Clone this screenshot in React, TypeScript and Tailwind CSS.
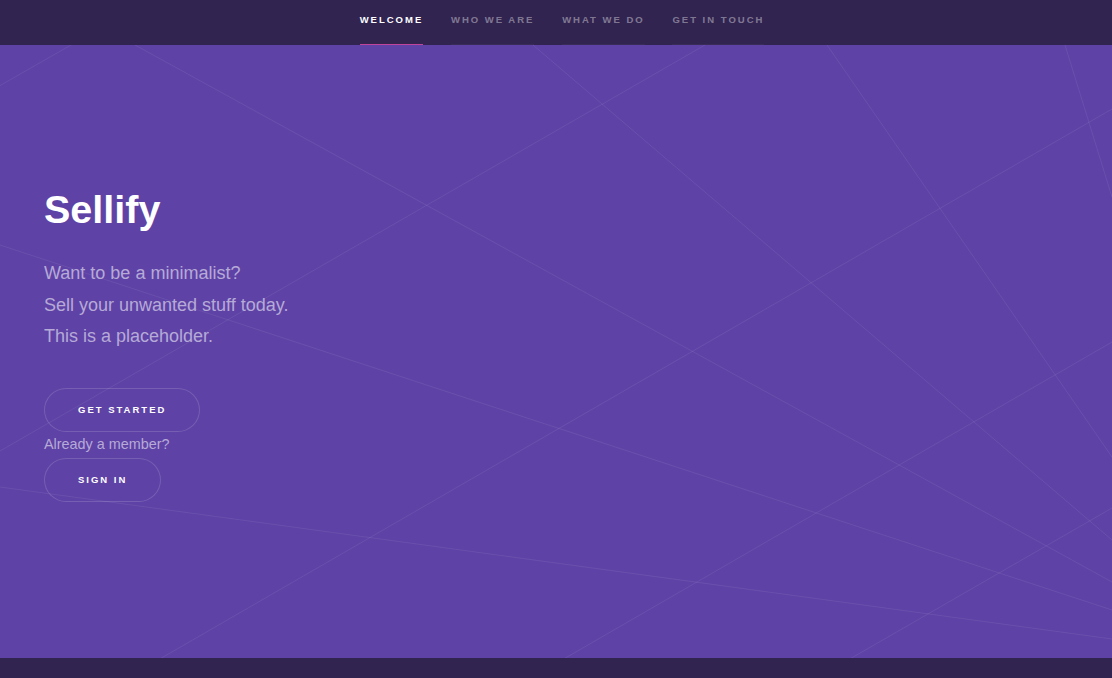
import React from "react";

const navItems = [
  { label: "Welcome", active: true },
  { label: "Who We Are", active: false },
  { label: "What We Do", active: false },
  { label: "Get In Touch", active: false },
];

const lines: [number, number, number, number][] = [
  [-20, 52, 92, -12],
  [135, 0, 1112, 537],
  [0, 200, 1112, 565],
  [705, 0, 0, 406],
  [533, 0, 1112, 495],
  [827, 0, 1112, 412],
  [1065, 0, 1112, 152],
  [1112, 64, 158, 615],
  [1112, 297, 562, 615],
  [1112, 463, 848, 615],
  [0, 442, 1112, 594],
];

function Lines() {
  return (
    <svg
      className="absolute inset-0 w-full h-full pointer-events-none"
      viewBox="0 0 1112 613"
      preserveAspectRatio="none"
    >
      {lines.map(([x1, y1, x2, y2], i) => (
        <line
          key={i}
          x1={x1}
          y1={y1}
          x2={x2}
          y2={y2}
          stroke="rgba(255,255,255,0.075)"
          strokeWidth={1}
        />
      ))}
    </svg>
  );
}

export default function App() {
  return (
    <div
      className="min-h-[678px] bg-[#312450] flex flex-col"
      style={{ fontFamily: '"Liberation Sans", Arial, Helvetica, sans-serif' }}
    >
      <nav className="h-[45px] bg-[#312450] flex justify-center pl-[12px] gap-[27.7px]">
        {navItems.map((item) => (
          <a
            key={item.label}
            href="#"
            className={`relative flex items-center pb-[5px] text-[9.5px] font-bold uppercase tracking-[2px] ${
              item.active ? "text-white" : "text-white/40"
            }`}
          >
            {item.label}
            <span
              className={`absolute left-0 right-0 bottom-0 h-[1.5px] ${
                item.active ? "bg-[#c0449a]" : "bg-white/[0.04]"
              }`}
            />
          </a>
        ))}
      </nav>

      <section className="relative h-[613px] bg-[#5e42a6] overflow-hidden">
        <Lines />
        <div className="relative pl-[44px] pt-[142px] flex flex-col items-start">
          <h1 className="text-[39.5px] leading-[44px] font-bold text-white">Sellify</h1>
          <p className="mt-[27px] text-[18px] leading-[31.5px] text-[#b6aad7]">
            Want to be a minimalist?
            <br />
            Sell your unwanted stuff today.
            <br />
            This is a placeholder.
          </p>
          <a
            href="#"
            className="mt-[35.8px] h-[43.5px] px-[34px] rounded-full shadow-[inset_0_0_0_1px_rgba(255,255,255,0.15)] flex items-center text-[9.5px] font-bold uppercase tracking-[2px] text-white"
          >
            Get Started
          </a>
          <span className="text-[14.4px] leading-[25.2px] text-[#b6aad7]">Already a member?</span>
          <a
            href="#"
            className="mt-[1.3px] h-[43.5px] px-[34px] rounded-full shadow-[inset_0_0_0_1px_rgba(255,255,255,0.15)] flex items-center text-[9.5px] font-bold uppercase tracking-[2px] text-white"
          >
            Sign In
          </a>
        </div>
      </section>

      <footer className="h-[20px] bg-[#312450]" />
    </div>
  );
}
